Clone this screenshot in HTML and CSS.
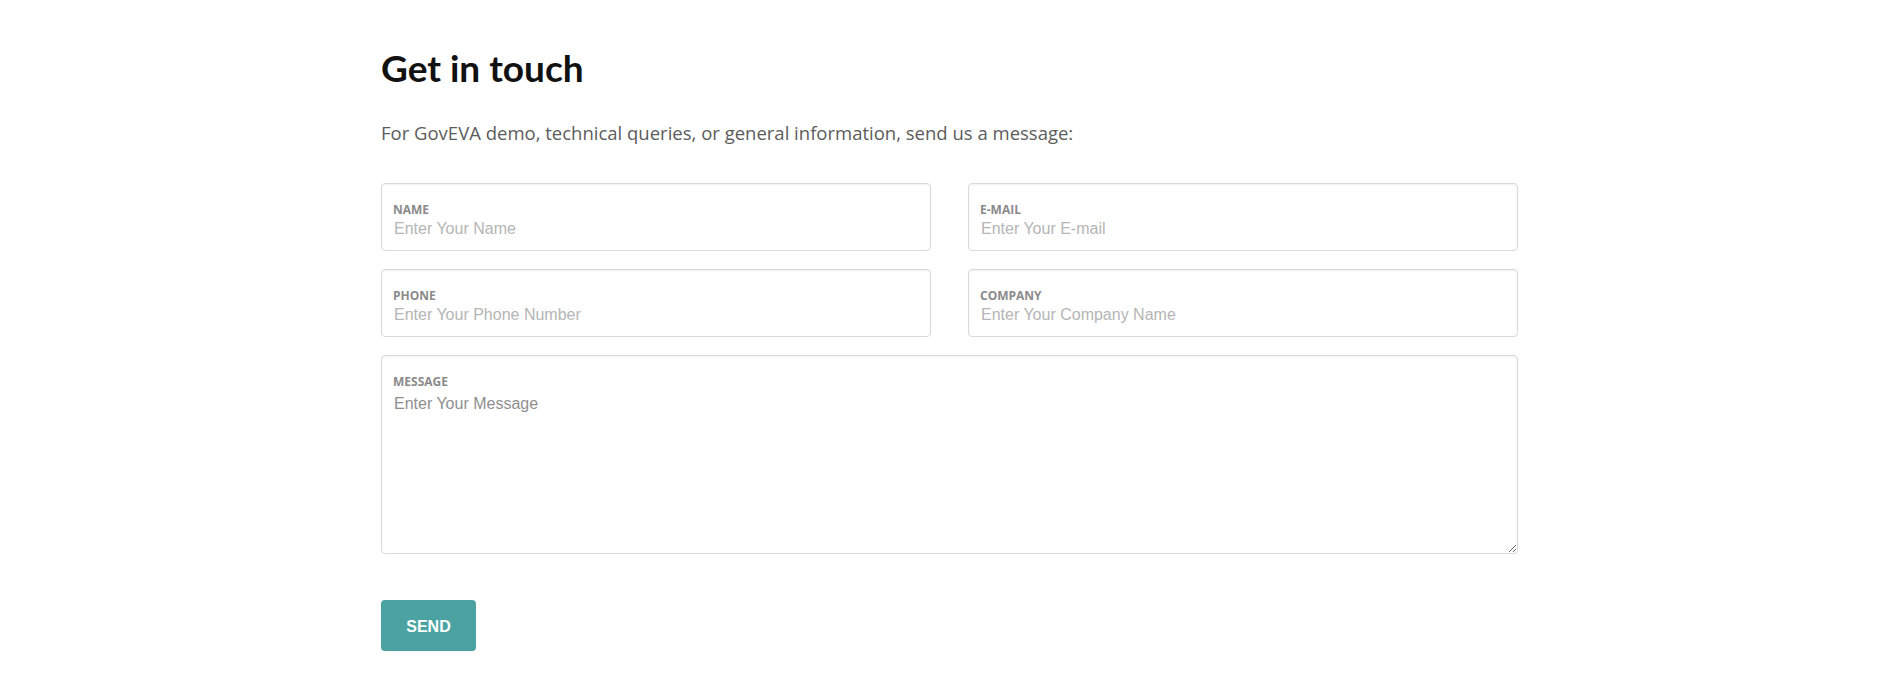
FILE: index.html
```html
<!DOCTYPE html>
<html lang="en">
<head>
<meta charset="utf-8">
<title>Get in touch</title>
<link rel="stylesheet" href="styles.css">
</head>
<body>
<main class="page">
  <h1 class="title">Get in touch</h1>
  <p class="lead">For GovEVA demo, technical queries, or general information, send us a message:</p>
  <form class="form">
    <div class="grid">
      <div class="field">
        <label class="label" for="name">NAME</label>
        <input class="input" id="name" type="text" placeholder="Enter Your Name">
      </div>
      <div class="field">
        <label class="label" for="email">E-MAIL</label>
        <input class="input" id="email" type="text" placeholder="Enter Your E-mail">
      </div>
      <div class="field">
        <label class="label" for="phone">PHONE</label>
        <input class="input" id="phone" type="text" placeholder="Enter Your Phone Number">
      </div>
      <div class="field">
        <label class="label" for="company">COMPANY</label>
        <input class="input" id="company" type="text" placeholder="Enter Your Company Name">
      </div>
      <div class="field field-wide">
        <label class="label" for="message">MESSAGE</label>
        <textarea class="input textarea" id="message" placeholder="Enter Your Message"></textarea>
      </div>
    </div>
    <button class="send" type="button">SEND</button>
  </form>
</main>
</body>
</html>
```

FILE: styles.css
```css
html, body {
  margin: 0;
  padding: 0;
  background: #fff;
}

.page {
  box-sizing: border-box;
  max-width: 1143px;
  margin: 0 auto;
  padding: 48px 0 0 6px;
}

.title {
  margin: 0;
  font-family: Lato, "Open Sans", sans-serif;
  font-weight: 700;
  font-size: 37px;
  line-height: 1.1;
  color: #111;
}

.lead {
  margin: 31px 0 0;
  font-family: "Open Sans", Lato, sans-serif;
  font-weight: 400;
  font-size: 18.5px;
  line-height: 1.4;
  color: #5c5c5c;
}

.form {
  margin-top: 37px;
}

.grid {
  display: grid;
  grid-template-columns: 1fr 1fr;
  column-gap: 37px;
  row-gap: 18px;
}

.field {
  position: relative;
}

.field-wide {
  grid-column: 1 / -1;
}

.label {
  position: absolute;
  left: 12px;
  top: 21px;
  font-family: "Open Sans", Lato, sans-serif;
  font-weight: 700;
  font-size: 12px;
  line-height: 1;
  color: #8a8a8a;
}

.input {
  display: block;
  box-sizing: border-box;
  width: 100%;
  height: 68px;
  margin: 0;
  padding: 32px 12px 7px;
  border: 1px solid #d9d9d9;
  border-radius: 4px;
  box-shadow: inset 0 1px 2px rgba(0, 0, 0, 0.06);
  font-family: "Liberation Sans", Arial, sans-serif;
  font-size: 16px;
  color: #555;
  background: #fff;
  outline: none;
}

.input::placeholder {
  color: #b5b5b5;
}

.textarea {
  height: 199px;
  padding-top: 38px;
  resize: vertical;
  line-height: 1.25;
}

.textarea::placeholder {
  color: #8f8f8f;
}

.send {
  margin-top: 46px;
  width: 95px;
  height: 51px;
  border: none;
  border-radius: 4px;
  background: #4aa3a2;
  color: #fff;
  font-family: "Liberation Sans", Arial, sans-serif;
  font-weight: 700;
  font-size: 16px;
  padding: 3px 0 0;
}
```
